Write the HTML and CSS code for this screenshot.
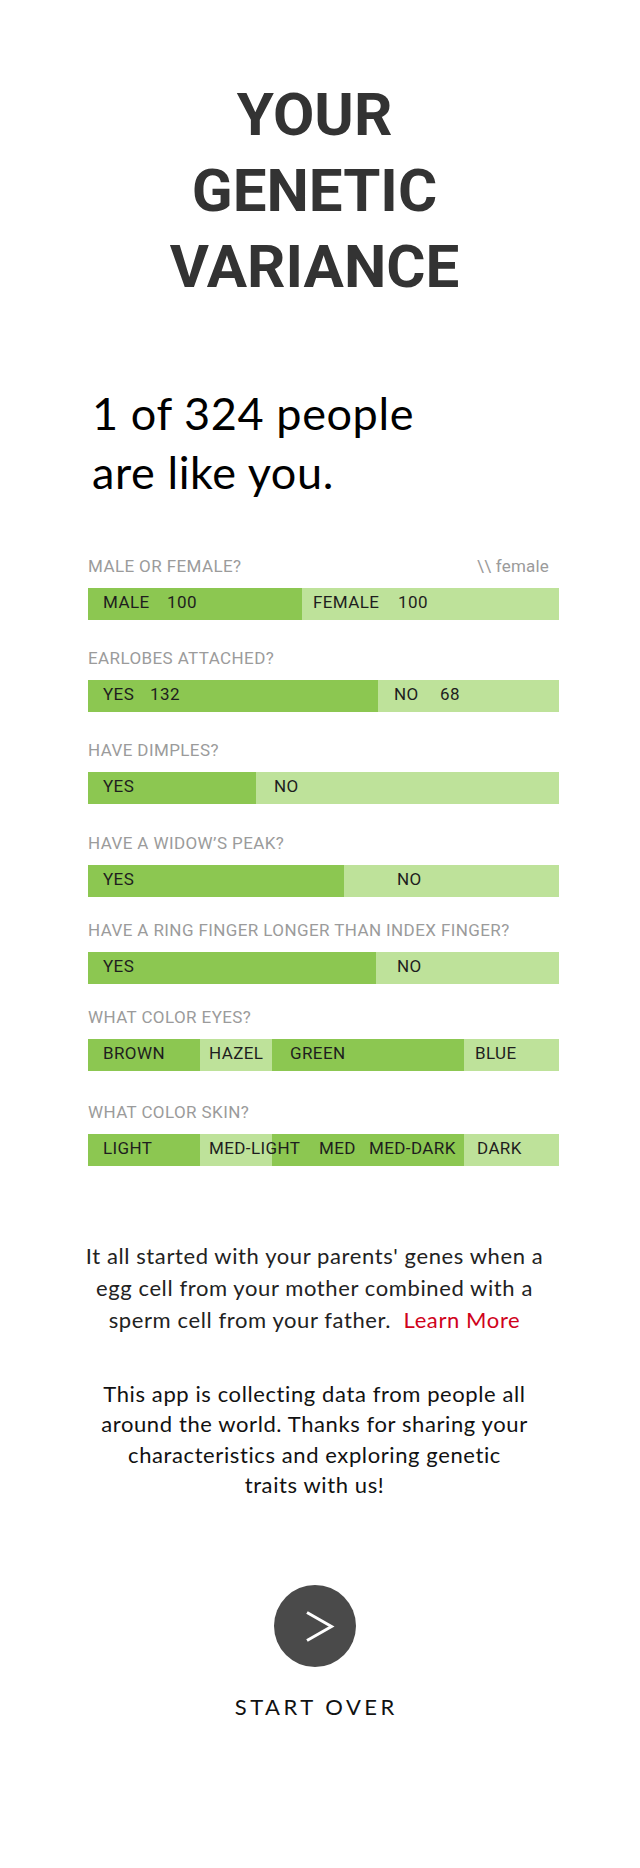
FILE: index.html
```html
<!DOCTYPE html>
<html lang="en">
<head>
<meta charset="utf-8">
<title>Your Genetic Variance</title>
<link rel="stylesheet" href="styles.css">
</head>
<body>
<main class="page">
  <h1 class="title">YOUR<br>GENETIC<br>VARIANCE</h1>

  <p class="match">1 of 324 people<br>are like you.</p>

  <section class="chart">
    <div class="row">
      <div class="row-head"><span class="question">MALE OR FEMALE?</span><span class="note">\\ female</span></div>
      <div class="bar">
        <div class="segs"><span class="seg dark" style="width:214px"></span><span class="seg light" style="width:257px"></span></div>
        <div class="labels"><span style="width:64px">MALE</span><span style="width:146px">100</span><span style="width:85px">FEMALE</span><span>100</span></div>
      </div>
    </div>

    <div class="row">
      <div class="row-head"><span class="question">EARLOBES ATTACHED?</span></div>
      <div class="bar">
        <div class="segs"><span class="seg dark" style="width:290px"></span><span class="seg light" style="width:181px"></span></div>
        <div class="labels"><span style="width:47px">YES</span><span style="width:244px">132</span><span style="width:46px">NO</span><span>68</span></div>
      </div>
    </div>

    <div class="row">
      <div class="row-head"><span class="question">HAVE DIMPLES?</span></div>
      <div class="bar">
        <div class="segs"><span class="seg dark" style="width:168px"></span><span class="seg light" style="width:303px"></span></div>
        <div class="labels"><span style="width:171px">YES</span><span>NO</span></div>
      </div>
    </div>

    <div class="row row-loose">
      <div class="row-head"><span class="question">HAVE A WIDOW’S PEAK?</span></div>
      <div class="bar">
        <div class="segs"><span class="seg dark" style="width:256px"></span><span class="seg light" style="width:215px"></span></div>
        <div class="labels"><span style="width:294px">YES</span><span>NO</span></div>
      </div>
    </div>

    <div class="row row-tight">
      <div class="row-head"><span class="question">HAVE A RING FINGER LONGER THAN INDEX FINGER?</span></div>
      <div class="bar">
        <div class="segs"><span class="seg dark" style="width:288px"></span><span class="seg light" style="width:183px"></span></div>
        <div class="labels"><span style="width:294px">YES</span><span>NO</span></div>
      </div>
    </div>

    <div class="row row-tight">
      <div class="row-head"><span class="question">WHAT COLOR EYES?</span></div>
      <div class="bar">
        <div class="segs"><span class="seg dark" style="width:112px"></span><span class="seg light" style="width:72px"></span><span class="seg dark" style="width:192px"></span><span class="seg light" style="width:95px"></span></div>
        <div class="labels"><span style="width:106px">BROWN</span><span style="width:81px">HAZEL</span><span style="width:185px">GREEN</span><span>BLUE</span></div>
      </div>
    </div>

    <div class="row row-wide">
      <div class="row-head"><span class="question">WHAT COLOR SKIN?</span></div>
      <div class="bar">
        <div class="segs"><span class="seg dark" style="width:112px"></span><span class="seg light" style="width:72px"></span><span class="seg dark" style="width:192px"></span><span class="seg light" style="width:95px"></span></div>
        <div class="labels"><span style="width:106px">LIGHT</span><span style="width:110px">MED-LIGHT</span><span style="width:50px">MED</span><span style="width:108px">MED-DARK</span><span>DARK</span></div>
      </div>
    </div>
  </section>

  <p class="story"><span>It all started with your parents' genes when a egg cell from your mother combined with a sperm cell from your father.&nbsp;</span> <a class="learn" href="#">Learn More</a></p>

  <p class="thanks">This app is collecting data from people all around the world. Thanks for sharing your characteristics and exploring genetic<br>traits with us!</p>

  <div class="restart">
    <a class="circle" href="#" aria-label="Start over">
      <svg width="82" height="82" viewBox="0 0 82 82"><polyline points="33,27.5 57.5,41.5 33,55.5" fill="none" stroke="#fff" stroke-width="3"/></svg>
    </a>
    <div class="restart-text">START OVER</div>
  </div>
</main>
</body>
</html>
```

FILE: styles.css
```css
html, body {
  margin: 0;
  padding: 0;
  background: #fff;
}

body {
  font-family: Lato, "Open Sans", sans-serif;
  color: #111;
}

.page {
  width: 629px;
  padding-bottom: 120px;
}

.title {
  margin: 77px 0 0;
  font-family: Roboto, "Liberation Sans", sans-serif;
  font-weight: 700;
  font-size: 60px;
  line-height: 76px;
  letter-spacing: 0;
  text-align: center;
  color: #333;
}

.match {
  margin: 79px 0 0;
  padding-left: 92px;
  font-family: Lato, sans-serif;
  font-size: 45px;
  line-height: 59px;
  letter-spacing: 0.6px;
  color: #000;
}

.chart {
  margin: 54px 0 0 88px;
  width: 471px;
  font-family: Roboto, "Liberation Sans", sans-serif;
  font-size: 17px;
  letter-spacing: 0.4px;
}

.row + .row {
  margin-top: 28px;
}

.row.row-loose {
  margin-top: 29px;
}

.row.row-tight {
  margin-top: 23px;
}

.row.row-wide {
  margin-top: 31px;
}

.row-head {
  display: flex;
  justify-content: space-between;
  line-height: 20px;
  color: #9b9b9b;
  margin-bottom: 12px;
}

.note {
  padding-right: 10px;
  letter-spacing: 0.2px;
}

.bar {
  display: grid;
  height: 32px;
}

.segs,
.labels {
  grid-area: 1 / 1;
  display: flex;
}

.seg {
  height: 32px;
}

.seg.dark {
  background: #8cc751;
}

.seg.light {
  background: #bee29a;
}

.labels {
  padding-left: 15px;
  line-height: 28px;
  color: #1e1e1e;
  white-space: nowrap;
}

.labels span {
  flex: none;
}

.story {
  margin: 74px auto 0;
  width: 480px;
  font-size: 22px;
  line-height: 32px;
  letter-spacing: 0.6px;
  text-align: center;
  color: #222;
}

.learn {
  color: #d0021b;
  text-decoration: none;
}

.thanks {
  margin: 43px auto 0;
  width: 440px;
  font-size: 22px;
  line-height: 30.3px;
  letter-spacing: 0.6px;
  text-align: center;
  color: #111;
}

.restart {
  margin-top: 85px;
  display: flex;
  flex-direction: column;
  align-items: center;
}

.circle {
  display: block;
  width: 82px;
  height: 82px;
  border-radius: 50%;
  background: #4a4a4a;
}

.circle svg {
  display: block;
}

.restart-text {
  margin-top: 27px;
  font-size: 22px;
  line-height: 26px;
  letter-spacing: 3.5px;
  padding-left: 3.5px;
  color: #111;
}
```
